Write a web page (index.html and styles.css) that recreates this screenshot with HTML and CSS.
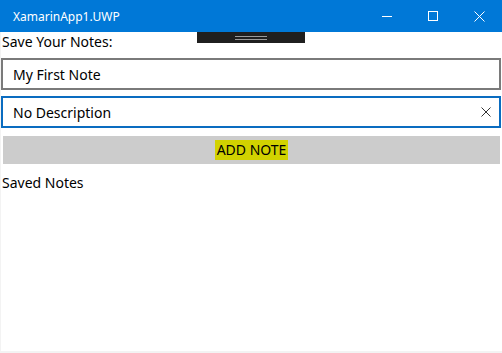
FILE: index.html
```html
<!DOCTYPE html>
<html lang="en">

<head>
    <meta charset="UTF-8">
    <title>XamarinApp1.UWP</title>
    <link rel="stylesheet" href="styles.css">
</head>

<body>
    <div class="window">
        <div class="titlebar">
            <span class="title">XamarinApp1.UWP</span>
            <div class="controls">
                <span class="ctl">
                    <svg width="10" height="10" viewBox="0 0 10 10"><path d="M0 5.5h10" stroke="#fff" stroke-width="1" fill="none"/></svg>
                </span>
                <span class="ctl">
                    <svg width="10" height="10" viewBox="0 0 10 10"><rect x="0.5" y="0.5" width="9" height="9" stroke="#fff" stroke-width="1" fill="none"/></svg>
                </span>
                <span class="ctl">
                    <svg width="11" height="11" viewBox="0 0 11 11"><path d="M0.5 0.5l10 10M10.5 0.5l-10 10" stroke="#fff" stroke-width="1" fill="none"/></svg>
                </span>
            </div>
        </div>
        <div class="debugbar"><i></i><i></i></div>
        <div class="content">
            <div class="label">Save Your Notes:</div>
            <div class="entry">My First Note</div>
            <div class="entry focused">
                <span>No Description</span>
                <svg class="clear" width="10" height="10" viewBox="0 0 10 10"><path d="M0.5 0.5l9 9M9.5 0.5l-9 9" stroke="#333" stroke-width="1" fill="none"/></svg>
            </div>
            <div class="button"><span>ADD NOTE</span></div>
            <div class="label saved">Saved Notes</div>
        </div>
    </div>
</body>

</html>
```
FILE: styles.css
```css
* {
    padding: 0;
    margin: 0;
    box-sizing: border-box;
}

body,
html {
    width: 100%;
    height: 100%;
    background: #fff;
    font-family: "Noto Sans", "Open Sans", sans-serif;
    color: #000;
}

.window {
    width: 100%;
    height: 100%;
    position: relative;
    border-left: 1px solid #f3f3f3;
    border-bottom: 2px solid #f3f3f3;
}

.titlebar {
    height: 32px;
    background: #0078d7;
    display: flex;
    align-items: center;
    justify-content: space-between;
    margin-left: -1px;
}

.title {
    color: #fff;
    font-size: 12px;
    padding-left: 13px;
}

.controls {
    display: flex;
    height: 100%;
}

.ctl {
    width: 46px;
    height: 100%;
    display: flex;
    align-items: center;
    justify-content: center;
}

.debugbar {
    position: absolute;
    left: 196px;
    top: 32px;
    width: 108px;
    height: 11px;
    background: #1f1f1f;
    display: flex;
    flex-direction: column;
    align-items: center;
    justify-content: center;
    gap: 2px;
}

.debugbar i {
    display: block;
    width: 32px;
    height: 1px;
    background: #9a9a9a;
}

.content {
    display: flex;
    flex-direction: column;
}

.label {
    font-size: 14px;
    line-height: 20px;
    padding-left: 1px;
    margin-bottom: 6px;
}

.entry {
    height: 32px;
    margin: 0 1px 0 0;
    border: 2px solid #7a7a7a;
    padding: 0 8px 0 10px;
    font-size: 14px;
    display: flex;
    align-items: center;
    justify-content: space-between;
}

.entry.focused {
    margin-top: 6px;
    border-color: #0a6cc0;
}

.button {
    height: 28px;
    margin: 8px 2px 0 2px;
    background: #cccccc;
    display: flex;
    align-items: center;
    justify-content: center;
    font-size: 14px;
}

.button span {
    background: #d2d200;
    line-height: 20px;
    padding: 0 2px;
}

.label.saved {
    margin-top: 9px;
}
```
